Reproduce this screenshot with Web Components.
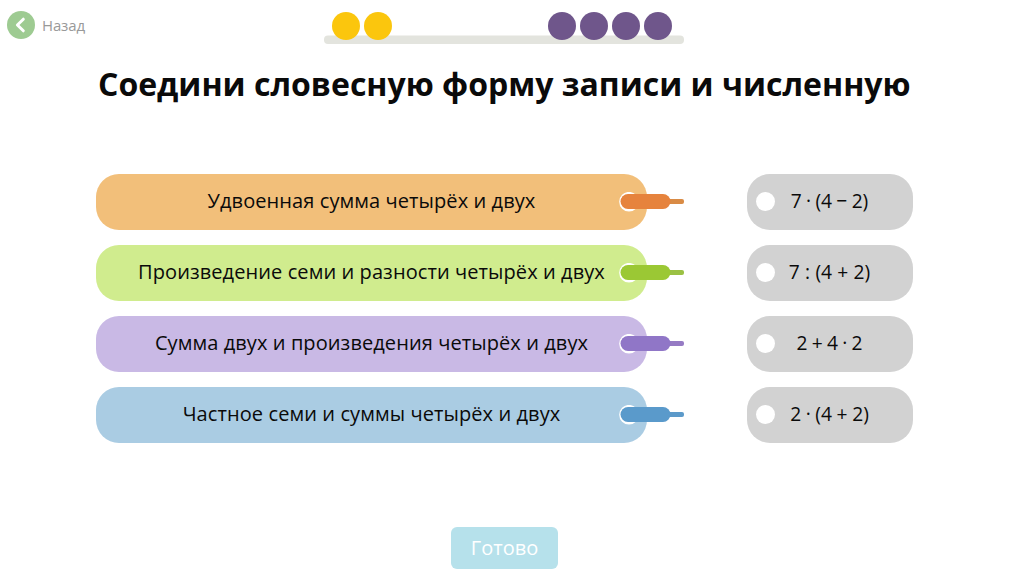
<!DOCTYPE html>
<html lang="ru">
<head>
<meta charset="utf-8">
<title>Соедини словесную форму записи и численную</title>
<style>
body{margin:0;background:#fff;font-family:"Open Sans","Noto Sans",sans-serif;color:#0a0a0a}
</style>
</head>
<body>
<match-exercise></match-exercise>
<script>
const define=(name,html,setup)=>customElements.define(name,class extends HTMLElement{
  constructor(){
    super();
    this.attachShadow({mode:'open'}).innerHTML=html;
  }
  connectedCallback(){ if(setup) setup(this,this.shadowRoot); }
});

define('back-link',`<style>
:host{display:flex;align-items:center;gap:7px;font:15px "Open Sans",sans-serif;color:#999;line-height:28px}
svg{display:block;width:28px;height:28px}
span{letter-spacing:-.15px}
</style><svg viewBox="0 0 28 28"><circle cx="14" cy="14" r="14" fill="#9ecb92"/><path d="M16.3 8.2 10.4 14l5.9 5.8" fill="none" stroke="#fff" stroke-width="3" stroke-linecap="round" stroke-linejoin="round"/></svg><span><slot></slot></span>`);

define('progress-beads',`<style>
:host{display:block;width:360px;height:32px}
svg{display:block}
</style><svg width="360" height="32"><rect y="23.5" width="360" height="8.5" rx="4" fill="#e3e4de"/><g></g></svg>`,(el,root)=>{
  const circles=(xs,fill)=>xs.map(x=>`<circle cx="${x}" cy="14" r="14" fill="${fill}"/>`).join('');
  root.querySelector('g').innerHTML=circles([22,54],'#fbc60d')+circles([238,270,302,334],'#6f568b');
});

define('lace-tag',`<style>
:host{display:grid;grid-template-columns:551px;height:56px;position:relative}
.pill{display:flex;align-items:center;justify-content:center;height:56px;box-sizing:border-box;padding-bottom:3px;border-radius:23px;background:var(--pill);font-size:20px;letter-spacing:.09px;white-space:nowrap}
svg{position:absolute;left:523px;top:18px}
</style><div class="pill"><span><slot></slot></span></div>
<svg width="66" height="20"><circle cx="10" cy="9.7" r="9.8" fill="#fff"/><rect x="38" y="7" width="27" height="5" rx="2" style="fill:var(--tip)"/><rect x="1.5" y="2" width="50" height="15" rx="7.5" style="fill:var(--lace)"/></svg>`);

define('answer-tag',`<style>
:host{display:flex;align-items:center;width:166px;height:56px;box-sizing:border-box;padding:0 1px 0 9px;border-radius:23px;background:#d2d2d2}
i{width:19px;height:19px;border-radius:50%;background:#fff;margin-top:-1px;flex:none}
.text{flex:1;text-align:center;font-size:20px;padding:0 0 3px;margin-right:28px;white-space:nowrap;word-spacing:var(--gap,-.4px);transform:scaleX(.96)}
</style><i></i><span class="text"><slot></slot></span>`);

define('done-button',`<style>
:host{display:block}
button{display:block;width:107px;height:42px;padding:0 0 2px;border:0;border-radius:6px;background:#b6e1eb;color:#fff;font:20px "Open Sans",sans-serif}
</style><button><slot></slot></button>`);

define('match-exercise',`<style>
:host{display:grid;grid-template-rows:47px 127px 269px 1fr;width:1014px;height:580px;overflow:hidden}
header{display:grid;grid-template-columns:317px 360px;padding:11px 0 0 7px;align-items:start}
progress-beads{margin-top:1px}
h1{margin:14px 0 0 98px;font-size:32px;line-height:46px;font-weight:700;white-space:nowrap}
.rows{display:grid;gap:15px;padding-left:96px}
.row{display:grid;grid-template-columns:551px 166px;column-gap:100px;height:56px}
footer{padding:84px 0 0 451px}
</style>
<header><back-link>Назад</back-link><progress-beads></progress-beads></header>
<h1>Соедини словесную форму записи и численную</h1>
<div class="rows">
<div class="row"><lace-tag style="--pill:#f2bf7a;--lace:#e6833d;--tip:#d98b45">Удвоенная сумма четырёх и двух</lace-tag><answer-tag style="--gap:-.7px">7 · (4 − 2)</answer-tag></div>
<div class="row"><lace-tag style="--pill:#d0ec8e;--lace:#9bc834;--tip:#9bc144">Произведение семи и разности четырёх и двух</lace-tag><answer-tag style="--gap:.3px">7 : (4 + 2)</answer-tag></div>
<div class="row"><lace-tag style="--pill:#c9b9e5;--lace:#9076c7;--tip:#967bc4">Сумма двух и произведения четырёх и двух</lace-tag><answer-tag style="--gap:-.8px">2 + 4 · 2</answer-tag></div>
<div class="row"><lace-tag style="--pill:#aacce3;--lace:#5a9acb;--tip:#5c9aca">Частное семи и суммы четырёх и двух</lace-tag><answer-tag>2 · (4 + 2)</answer-tag></div>
</div>
<footer><done-button>Готово</done-button></footer>`);
</script>
</body>
</html>
